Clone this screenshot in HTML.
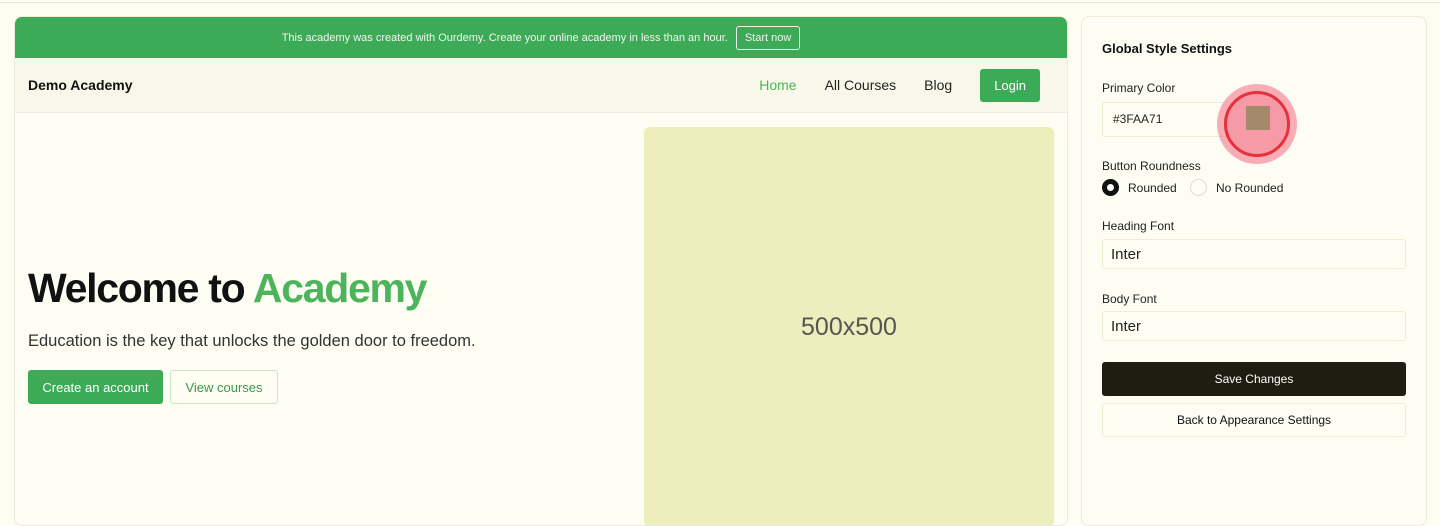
<!DOCTYPE html>
<html><head><meta charset="utf-8"><style>
*{box-sizing:border-box;margin:0;padding:0}
body{width:1440px;height:513px;background:#fdfdf2;font-family:"Liberation Sans",sans-serif;position:relative;overflow:hidden;color:#111}
.topline{position:absolute;left:0;top:0;width:1440px;height:3px;border-bottom:1px solid #e6e6dc}
.main{position:absolute;left:14px;top:16px;width:1054px;height:510px;background:#fdfdf4;border:1px solid #ececd8;border-radius:8px;overflow:hidden}
.banner{height:41px;background:#3daa57;color:#f0f6ee;font-size:11px;display:flex;align-items:center;justify-content:center;gap:8px}
.banner span.b{border:1px solid #e8f3e4;border-radius:3px;padding:5px 8px;font-size:11px}
.nav{height:55px;background:#f8f8ea;display:flex;align-items:center;padding:0 13px;border-bottom:1px solid #ececdc}
.nav .logo{font-weight:bold;font-size:14px}
.nav .links{margin-left:auto;display:flex;align-items:center;font-size:14px}
.nav .links a{margin-right:28px;color:#222}
.nav .login{background:#3daa57;color:#fff;padding:9px 14px;border-radius:3px;font-size:13px;margin-right:14px}
h1{position:absolute;left:13px;top:248px;font-size:41px;letter-spacing:-1.3px;font-weight:bold}
h1 span{color:#4cb55c}
.sub{position:absolute;left:13px;top:315px;font-size:16.5px;color:#333}
.btn1{position:absolute;left:13px;top:353px;width:135px;height:34px;background:#3daa57;color:#fff;font-size:13px;border-radius:3px;display:flex;align-items:center;justify-content:center}
.btn2{position:absolute;left:155px;top:353px;width:108px;height:34px;border:1px solid #cfe6c5;color:#3a9a4a;font-size:13px;border-radius:3px;display:flex;align-items:center;justify-content:center}
.ph{position:absolute;left:629px;top:110px;width:410px;height:400px;background:#eeeebc;border-radius:6px;display:flex;align-items:center;justify-content:center;font-size:25px;color:#555}
.side{position:absolute;left:1081px;top:16px;width:346px;height:510px;border:1px solid #ececd8;border-radius:8px;background:#fdfdf4}
.side .t{position:absolute;left:20px;top:24px;font-weight:bold;font-size:13px}
.lbl{position:absolute;left:20px;font-size:12px;color:#222}
.inp{position:absolute;left:20px;width:304px;height:30px;border:1px solid #ececd4;border-radius:3px;font-size:15px;padding:6px 8px;color:#222}
.radio{position:absolute;top:162px;width:17px;height:17px;border-radius:50%}
.save{position:absolute;left:20px;top:345px;width:304px;height:34px;background:#1f1c12;color:#fff;font-size:12px;border-radius:3px;display:flex;align-items:center;justify-content:center}
.back{position:absolute;left:20px;top:386px;width:304px;height:34px;border:1px solid #ececd4;font-size:12px;border-radius:3px;display:flex;align-items:center;justify-content:center}
</style></head><body>
<div class="topline"></div>
<div class="main">
<div class="banner">This academy was created with Ourdemy. Create your online academy in less than an hour. <span class="b">Start now</span></div>
<div class="nav"><div class="logo">Demo Academy</div><div class="links"><a style="color:#4cb55c">Home</a><a>All Courses</a><a>Blog</a><div class="login">Login</div></div></div>
<h1>Welcome to <span>Academy</span></h1>
<div class="sub">Education is the key that unlocks the golden door to freedom.</div>
<div class="btn1">Create an account</div>
<div class="btn2">View courses</div>
<div class="ph">500x500</div>
</div>
<div class="side">
<div class="t">Global Style Settings</div>
<div class="lbl" style="top:64px">Primary Color</div>
<div class="inp" style="top:85px;width:130px;height:35px;font-size:12px;padding:9px 10px">#3FAA71</div>
<div class="lbl" style="top:142px">Button Roundness</div>
<div class="radio" style="left:20px;background:#111;border:5px solid #111"><div style="width:7px;height:7px;background:#fff;border-radius:50%"></div></div>
<div class="lbl" style="top:164px;left:46px">Rounded</div>
<div class="radio" style="left:108px;border:1px solid #ddd"></div>
<div class="lbl" style="top:164px;left:134px">No Rounded</div>
<div class="lbl" style="top:202px">Heading Font</div>
<div class="inp" style="top:222px">Inter</div>
<div class="lbl" style="top:275px">Body Font</div>
<div class="inp" style="top:294px">Inter</div>
<div class="save">Save Changes</div>
<div class="back">Back to Appearance Settings</div>
</div>
<div style="position:absolute;left:1217px;top:84px;width:80px;height:80px;border-radius:50%;background:rgba(245,120,140,.6)"></div>
<div style="position:absolute;left:1224px;top:91px;width:66px;height:66px;border-radius:50%;border:3px solid #e8303c;background:#f59aa6"></div>
<div style="position:absolute;left:1246px;top:106px;width:24px;height:24px;background:#a48a6a"></div>
</body></html>
